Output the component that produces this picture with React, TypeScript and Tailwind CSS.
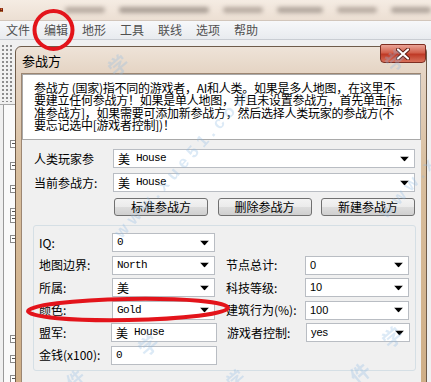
import React from "react";

const CJK = "font-['Noto_Sans_CJK_SC','Noto_Sans',sans-serif]";
const MONO = "font-['Liberation_Mono',monospace] text-[11px] tracking-[-0.6px]";
const SANS = "font-['Liberation_Sans',sans-serif] text-[11px]";

function Arrow() {
  return (
    <svg
      className="absolute right-[5px] top-1/2 -translate-y-1/2"
      width="9"
      height="5"
      viewBox="0 0 9 5"
    >
      <path d="M0 0H9L4.5 5Z" fill="#000" />
    </svg>
  );
}

function Combo({
  children,
  className = "",
  arrow = true,
}: {
  children: React.ReactNode;
  className?: string;
  arrow?: boolean;
}) {
  return (
    <div
      className={`relative h-[19px] bg-white border border-[#b9bdc3] flex items-center pl-[4px] ${className}`}
    >
      <span className="leading-none whitespace-nowrap flex items-center">{children}</span>
      {arrow && <Arrow />}
    </div>
  );
}

function House() {
  return (
    <>
      <span className="text-[12px]">美</span>
      <span className={`${MONO} ml-[6px]`}>House</span>
    </>
  );
}

function Button({ label }: { label: string }) {
  return (
    <div className="w-[94px] h-[18px] rounded-[3px] border border-[#707070] bg-[linear-gradient(#f3f3f3_0%,#ebebeb_50%,#dddddd_51%,#cfcfcf_100%)] flex items-center justify-center text-[12px] leading-none">
      {label}
    </div>
  );
}

function LeftStrip() {
  const marks = [100, 122, 145, 168, 175, 195, 295, 315, 335];
  return (
    <div className="w-[15px] relative h-[342px] bg-[#f0f0f0]">
      <div className="absolute left-[1px] top-[4px] w-[13px] h-[58px] bg-[radial-gradient(circle,#8c8c8c_0.8px,transparent_1.2px)] bg-[length:4px_4px]" />
      <div className="absolute left-0 top-[64px] w-[15px] h-[1px] bg-[#a8a8a8]" />
      <div className="absolute left-[3px] top-[65px] w-[1px] h-[280px] bg-[#9a9a9a]" />
      <div className="absolute left-[4px] top-[65px] w-[11px] h-[280px] bg-[#fafafa]" />
      {marks.map((y) => (
        <div
          key={y}
          className="absolute left-[10px] w-[6px] h-[8px] border border-[#8a8a8a] bg-white"
          style={{ top: y }}
        >
          <div className="absolute left-[1px] top-[2px] w-[3px] h-[1px] bg-[#555]" />
        </div>
      ))}
    </div>
  );
}

function Logo() {
  return (
    <svg width="16" height="20" viewBox="0 0 16 20">
      <rect width="16" height="20" fill="#6e1a0c" />
      <path d="M2 3 L8 1 L13 4 L11 9 L6 11 L3 8Z" fill="#c8441c" />
      <path d="M5 4 L9 3 L11 6 L8 8Z" fill="#f0b030" />
      <text x="1" y="18" fontSize="6" fontWeight="bold" fill="#f6d040" fontFamily="Liberation Sans">
        FAE
      </text>
    </svg>
  );
}

export default function App() {
  const lines = [
    "参战方 (国家)指不同的游戏者，AI和人类。如果是多人地图，在这里不",
    "要建立任何参战方！如果是单人地图，并且未设置参战方，首先单击[标",
    "准参战方]，如果需要可添加新参战方，然后选择人类玩家的参战方(不",
    "要忘记选中[游戏者控制])！",
  ];

  return (
    <div className={`w-[431px] h-[382px] overflow-hidden relative bg-[#f0f0f0] text-black ${CJK}`}>
      {/* top title bar (blurred) */}
      <div className="h-[21px] relative flex items-start bg-gradient-to-b from-[#f5ece3] to-[#ecdfd3] border-b border-[#d2c6bb]">
        <Logo />
        <div className="flex items-center gap-[14px] ml-[62px] mt-[7px] blur-[2px]">
          <div className="w-[40px] h-[6px] rounded-full bg-[#b7aba1]" />
          <div className="w-[90px] h-[6px] rounded-full bg-[#a99e95]" />
          <div className="w-[40px] h-[6px] rounded-full bg-[#b7aba1]" />
          <div className="w-[46px] h-[6px] rounded-full bg-[#b0a59c]" />
          <div className="w-[40px] h-[6px] rounded-full bg-[#b7aba1]" />
          <div className="w-[40px] h-[6px] rounded-full bg-[#b0a59c]" />
        </div>
      </div>

      {/* menu bar */}
      <div className="h-[19px] flex items-center pl-[6px] gap-[14px] text-[12px] leading-none text-[#505050] bg-gradient-to-b from-[#f7f8fa] to-[#e8ebef] border-b border-[#c9cdd3]">
        <span>文件</span>
        <span>编辑</span>
        <span>地形</span>
        <span>工具</span>
        <span>联线</span>
        <span>选项</span>
        <span>帮助</span>
      </div>

      {/* body */}
      <div className="flex">
        <LeftStrip />
        <div className="pt-[6px] w-[412px]">
          {/* window */}
          <div className="relative w-[412px] h-[340px] rounded-t-[6px] border border-[#6f5c4a] bg-[linear-gradient(#eee3d8,#e4d3c2_28px,#d9bf9f_120px,#cfae86)] px-[5px]">
            <div className="h-[26px] flex items-center pl-[1px] text-[13px] leading-none">参战方</div>
            {/* close button */}
            <div className="absolute right-0 top-[-3px] w-[46px] h-[19px] rounded-b-[4px] rounded-t-[2px] border border-[#7d2e22] bg-[linear-gradient(#eaa497,#d2604c_45%,#bf3a26_55%,#d8705a)] flex items-center justify-center">
              <svg width="14" height="12" viewBox="0 0 14 12">
                <path d="M2 1.5 L12 10.5 M12 1.5 L2 10.5" stroke="#5a1a10" strokeWidth="4" strokeLinecap="round" />
                <path d="M2 1.5 L12 10.5 M12 1.5 L2 10.5" stroke="#ffffff" strokeWidth="2.2" strokeLinecap="round" />
              </svg>
            </div>

            {/* client area */}
            <div className="w-[400px] h-[320px] bg-[#f0f0f0] border-l border-t border-[#9c8672]">
              {/* description */}
              <div className="h-[66px] bg-white border border-[#a9a9a9] pl-[11px] pt-[7px] text-[12px] leading-[12.4px] tracking-[-0.25px]">
                {lines.map((l) => (
                  <div key={l} className="whitespace-nowrap">
                    {l}
                  </div>
                ))}
              </div>

              {/* player combos */}
              <div className="mt-[9px] flex items-center pl-[12px] text-[12px]">
                <span className="w-[79px] leading-none">人类玩家参</span>
                <Combo className="w-[302px]">
                  <House />
                </Combo>
              </div>
              <div className="mt-[5px] flex items-center pl-[12px] text-[12px]">
                <span className="w-[79px] leading-none">当前参战方:</span>
                <Combo className="w-[302px]">
                  <House />
                </Combo>
              </div>

              {/* buttons */}
              <div className="mt-[6px] ml-[92px] flex gap-[9.5px]">
                <Button label="标准参战方" />
                <Button label="删除参战方" />
                <Button label="新建参战方" />
              </div>

              {/* group box */}
              <div className="mt-[9px] ml-[11px] w-[383px] h-[146px] border border-[#d5dfe5] rounded-[3px] pt-[7px] pl-[5px] flex flex-col gap-[3.6px] text-[12px]">
                <div className="flex items-center">
                  <span className="w-[73px] leading-none">IQ:</span>
                  <Combo className="w-[103px]">
                    <span className={MONO}>0</span>
                  </Combo>
                </div>
                <div className="flex items-center">
                  <span className="w-[73px] leading-none">地图边界:</span>
                  <Combo className="w-[103px]">
                    <span className={MONO}>North</span>
                  </Combo>
                  <span className="w-[79px] ml-[11px] leading-none">节点总计:</span>
                  <Combo className="w-[104px]">
                    <span className={SANS}>0</span>
                  </Combo>
                </div>
                <div className="flex items-center">
                  <span className="w-[73px] leading-none">所属:</span>
                  <Combo className="w-[103px]">
                    <span className="text-[12px]">美</span>
                  </Combo>
                  <span className="w-[79px] ml-[11px] leading-none">科技等级:</span>
                  <Combo className="w-[104px]">
                    <span className={SANS}>10</span>
                  </Combo>
                </div>
                <div className="flex items-center">
                  <span className="w-[73px] leading-none">颜色:</span>
                  <Combo className="w-[103px]">
                    <span className={MONO}>Gold</span>
                  </Combo>
                  <span className="w-[79px] ml-[11px] leading-none whitespace-nowrap">建筑行为(%):</span>
                  <Combo className="w-[104px]">
                    <span className={SANS}>100</span>
                  </Combo>
                </div>
                <div className="flex items-center">
                  <span className="w-[72px] leading-none">盟军:</span>
                  <Combo className="w-[106px]" arrow={false}>
                    <House />
                  </Combo>
                  <span className="w-[79px] ml-[10px] leading-none">游戏者控制:</span>
                  <Combo className="w-[104px]">
                    <span className={SANS}>yes</span>
                  </Combo>
                </div>
                <div className="flex items-center">
                  <span className="w-[72px] leading-none whitespace-nowrap">金钱(x100):</span>
                  <Combo className="w-[106px]" arrow={false}>
                    <span className={MONO}>0</span>
                  </Combo>
                </div>
              </div>
            </div>
          </div>
        </div>
      </div>

      {/* watermark overlay */}
      <div className="absolute inset-0 pointer-events-none text-[#8fbbe4] opacity-30 font-bold">
        <div className="absolute left-[85px] top-[150px] -rotate-[48deg] text-[17px] tracking-[5px] font-['Liberation_Sans',sans-serif]">
          www.xue51.com
        </div>
        <div className="absolute left-[350px] top-[130px] -rotate-[48deg] text-[17px] tracking-[5px] font-['Liberation_Sans',sans-serif]">
          www.xue51.com
        </div>
        <div className="absolute left-[108px] top-[50px] -rotate-[40deg] text-[20px]">学</div>
        <div className="absolute left-[385px] top-[45px] -rotate-[40deg] text-[20px]">学</div>
        <div className="absolute left-[138px] top-[330px] -rotate-[40deg] text-[20px]">学</div>
        <div className="absolute left-[382px] top-[322px] -rotate-[40deg] text-[20px]">学</div>
        <div className="absolute left-[350px] top-[358px] -rotate-[40deg] text-[20px]">件</div>
        <div className="absolute left-[66px] top-[365px] -rotate-[40deg] text-[18px]">件</div>
        <div className="absolute left-[226px] top-[365px] -rotate-[40deg] text-[18px]">学</div>
      </div>

      {/* red annotations */}
      <svg className="absolute left-0 top-0 pointer-events-none" width="431" height="382">
        <ellipse cx="53.5" cy="30" rx="19" ry="19" fill="none" stroke="#e3141b" strokeWidth="4" />
        <ellipse cx="128" cy="309.5" rx="100" ry="10.5" fill="none" stroke="#e3141b" strokeWidth="4" transform="rotate(-1 128 309.5)" />
      </svg>
    </div>
  );
}
